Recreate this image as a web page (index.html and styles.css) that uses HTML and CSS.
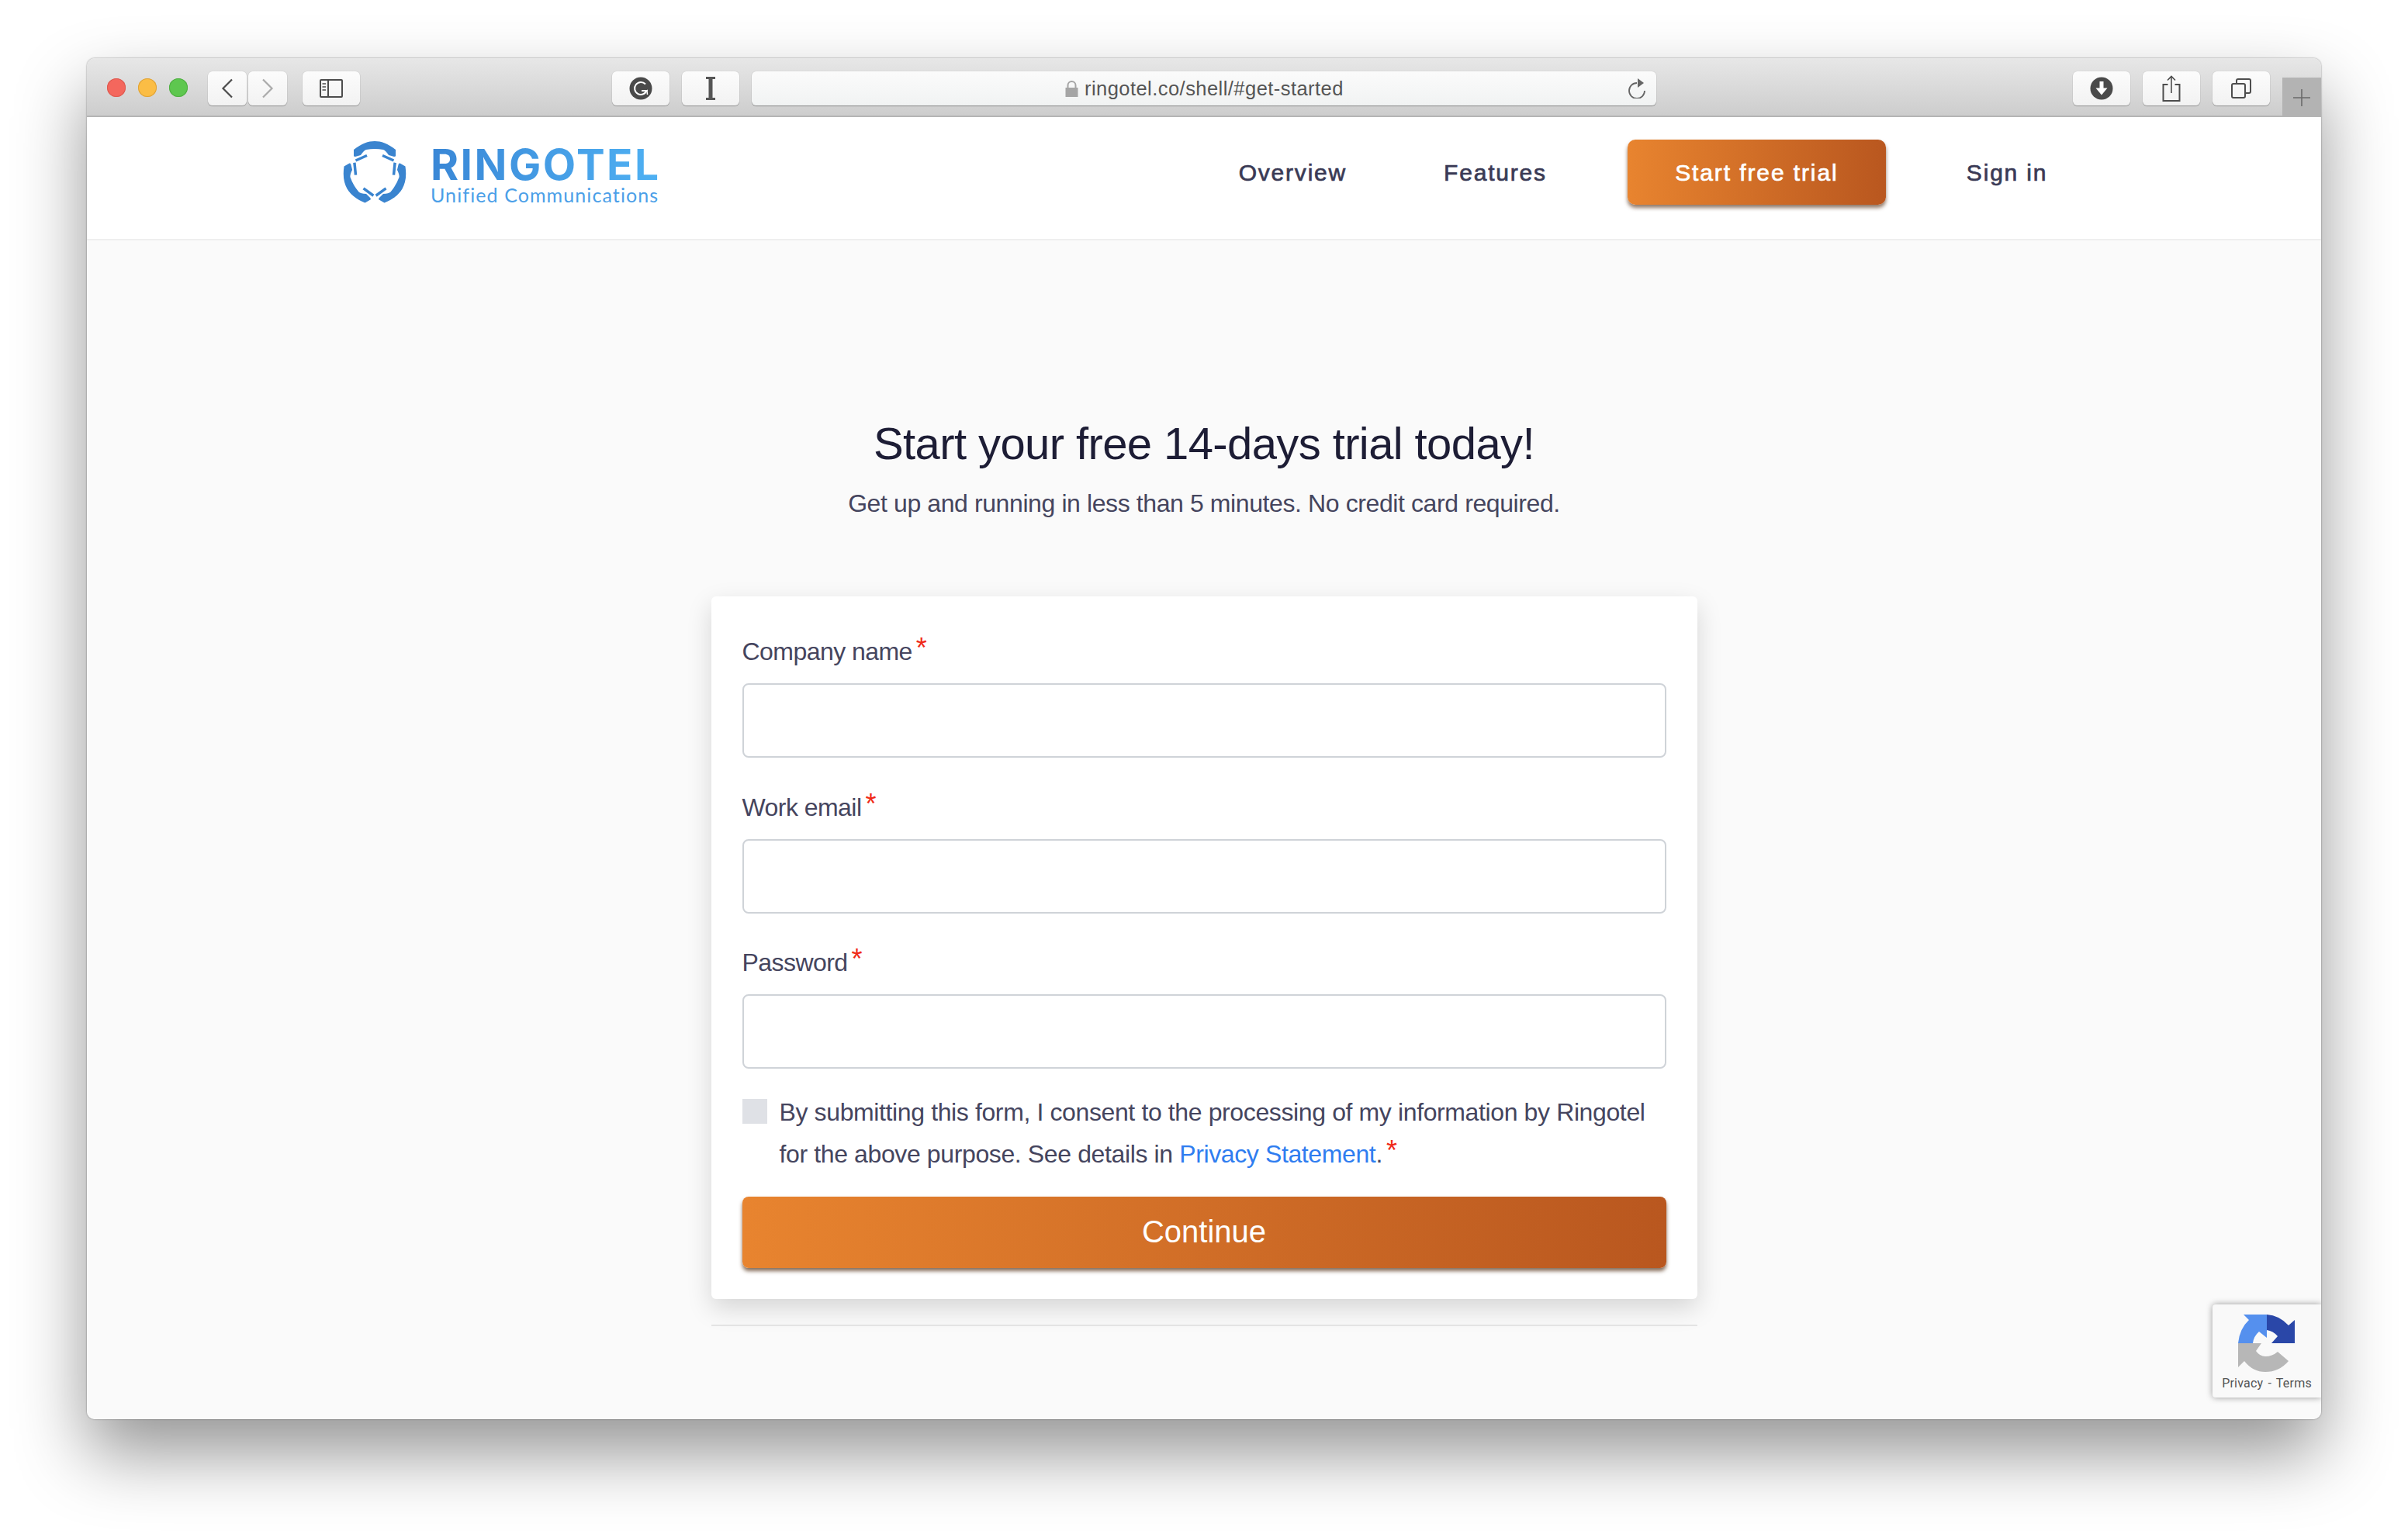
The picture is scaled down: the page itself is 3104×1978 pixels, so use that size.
FILE: index.html
```html
<!DOCTYPE html>
<html lang="en">
<head>
    <meta charset="UTF-8">
    <title>Ringotel - Start your free trial</title>
    <link rel="stylesheet" href="styles.css">
</head>
<body>
    <div class="window">
        <!-- Browser toolbar -->
        <div class="toolbar">
            <div class="lights">
                <span class="light red"></span>
                <span class="light yellow"></span>
                <span class="light green"></span>
            </div>
            <div class="tool tool-nav nav-back">
                <svg width="16" height="26" viewBox="0 0 16 26"><path d="M14 1.5 L2.5 13 L14 24.5" fill="none" stroke="#4d4d4d" stroke-width="2.2"/></svg>
            </div>
            <div class="tool tool-nav nav-forward">
                <svg width="16" height="26" viewBox="0 0 16 26"><path d="M2 1.5 L13.5 13 L2 24.5" fill="none" stroke="#ababab" stroke-width="2.2"/></svg>
            </div>
            <div class="tool tool-sidebar">
                <svg width="30" height="24" viewBox="0 0 30 24"><rect x="1" y="1" width="28" height="22" rx="1" fill="none" stroke="#4d4d4d" stroke-width="2"/><path d="M11 1 V23" stroke="#4d4d4d" stroke-width="2"/><path d="M3.5 6 H8 M3.5 10 H8 M3.5 14 H8" stroke="#777" stroke-width="2"/></svg>
            </div>
            <div class="tool tool-grammarly">
                <svg width="30" height="30" viewBox="0 0 30 30"><circle cx="15" cy="15" r="14.5" fill="#4a4a4a"/><path d="M21 9.5 A8 8 0 1 0 22.5 18 L16 18" fill="none" stroke="#fff" stroke-width="2"/><path d="M19 22 L23 18 L23.5 23" fill="none" stroke="#fff" stroke-width="1.5"/></svg>
            </div>
            <div class="tool tool-cursor">
                <svg width="14" height="30" viewBox="0 0 14 30"><path d="M1 1.5 H13 M1 28.5 H13" stroke="#555" stroke-width="3"/><path d="M7 1 V29" stroke="#555" stroke-width="5"/></svg>
            </div>
            <div class="address">
                <svg class="lock" width="17" height="21" viewBox="0 0 17 21"><path d="M3.5 10 V6 A5 5 0 0 1 13.5 6 V10" fill="none" stroke="#a5a5a5" stroke-width="2"/><rect x="0.5" y="9" width="16" height="12" fill="#a5a5a5"/></svg>
                <span class="address-text">ringotel.co/shell/#get-started</span>
                <svg class="reload" width="24" height="26" viewBox="0 0 24 26"><path d="M11 6 A10 10 0 1 0 21 16" fill="none" stroke="#666" stroke-width="1.8"/><path d="M12 0 L20 6 L12 12 Z" fill="#666"/></svg>
            </div>
            <div class="tool tool-download">
                <svg width="30" height="30" viewBox="0 0 30 30"><circle cx="15" cy="15" r="14.5" fill="#4a4a4a"/><path d="M12.5 6 H17.5 V14.5 H22.5 L15 23.5 L7.5 14.5 H12.5 Z" fill="#fff"/></svg>
            </div>
            <div class="tool tool-share">
                <svg width="24" height="34" viewBox="0 0 24 34"><path d="M7.5 12 H1.5 V33 H22.5 V12 H16.5" fill="none" stroke="#4d4d4d" stroke-width="2"/><path d="M12 1.5 V23" stroke="#4d4d4d" stroke-width="1.6"/><path d="M7 6.5 L12 1.5 L17 6.5" fill="none" stroke="#4d4d4d" stroke-width="1.6"/></svg>
            </div>
            <div class="tool tool-tabs">
                <svg width="26" height="26" viewBox="0 0 26 26"><rect x="1" y="7" width="17" height="18" rx="2" fill="none" stroke="#4d4d4d" stroke-width="2"/><path d="M7 7 V3 Q7 1 9 1 H23 Q25 1 25 3 V17 Q25 19 23 19 H18" fill="none" stroke="#4d4d4d" stroke-width="2"/></svg>
            </div>
            <div class="new-tab">
                <svg width="24" height="24" viewBox="0 0 24 24"><path d="M12 1 V23 M1 12 H23" stroke="#6a6a6a" stroke-width="1.6"/></svg>
            </div>
        </div>

        <!-- Site header -->
        <header class="site-header">
            <a href="#" class="logo">
                <svg class="logo-mark" width="82" height="80" viewBox="0 0 82 80">
                    <defs>
                        <g id="handset">
                            <path d="M14 11 C24 3 33 0 41 0 C49 0 58 3 68 11 L68 19 Q68 20 66 20 L59 18 Q55 12 52 11 Q41 9 30 11 Q27 12 23 18 L16 20 Q14 20 14 19 Z" fill="#3a84cf"/>
                            <path d="M16.5 25 L31 18.5 M51 18.5 L65.5 25" stroke="#3a84cf" stroke-width="3.5"/>
                        </g>
                    </defs>
                    <use href="#handset"/>
                    <use href="#handset" transform="rotate(120 41 41)"/>
                    <use href="#handset" transform="rotate(240 41 41)"/>
                </svg>
                <div class="logo-text">
                    <div class="logo-name">RINGOTEL</div>
                    <div class="logo-tag">Unified Communications</div>
                </div>
            </a>
            <nav class="site-nav">
                <a href="#" class="nav-link link-overview">Overview</a>
                <a href="#" class="nav-link link-features">Features</a>
                <a href="#" class="nav-button">Start free trial</a>
                <a href="#" class="nav-link link-signin">Sign in</a>
            </nav>
        </header>

        <!-- Sign up form -->
        <main class="content">
            <h1>Start your free 14-days trial today!</h1>
            <p class="subtitle">Get up and running in less than 5 minutes. No credit card required.</p>

            <form class="card">
                <label class="field-label">Company name<span class="req">*</span></label>
                <input class="field-input" type="text">

                <label class="field-label">Work email<span class="req">*</span></label>
                <input class="field-input" type="email">

                <label class="field-label">Password<span class="req">*</span></label>
                <input class="field-input" type="password">

                <div class="consent">
                    <span class="consent-box"></span>
                    <p class="consent-text">By submitting this form, I consent to the processing of my information by Ringotel for the above purpose. See details in <a href="#">Privacy Statement</a>.<span class="req">*</span></p>
                </div>

                <button type="button" class="submit-button">Continue</button>
            </form>
            <div class="card-rule"></div>
        </main>

        <div class="recaptcha">
            <svg width="74" height="74" viewBox="0 0 74 74">
                <path d="M37 0 L7 0 L14 7 Q2 18 0 37 L19 37 Q20 28 27 22 L37 30 Z" fill="#5590ee"/>
                <path d="M37 0 Q53 1 65 14 L73 7 L73 37 L43 37 L51 28 Q45 21 37 20 Z" fill="#2a47a8"/>
                <path d="M0 37 L0 68 L8 60 Q19 74 35 74 Q53 74 65 60 L51 48 Q44 54 35 54 Q28 54 23 47 L30 37 Z" fill="#b7b7b7"/>
            </svg>
            <div class="recaptcha-links">Privacy - Terms</div>
        </div>
    </div>
</body>
</html>
```

FILE: styles.css
```css
* {
    margin: 0;
    padding: 0;
    box-sizing: border-box;
}

body {
    font-family: 'Liberation Sans', Arial, sans-serif;
    background: #fff;
    width: 3104px;
    height: 1978px;
    padding: 75px 112px 0;
    overflow: hidden;
}

.window {
    position: relative;
    width: 2880px;
    height: 1755px;
    display: flex;
    flex-direction: column;
    border-radius: 10px;
    overflow: hidden;
}

body::before {
    content: "";
    position: absolute;
    left: 112px;
    top: 75px;
    width: 2880px;
    height: 1755px;
    border-radius: 10px;
    box-shadow: 0 44px 90px rgba(0,0,0,0.42), 0 0 2px rgba(0,0,0,0.5);
}

/* Browser toolbar */
.toolbar {
    position: relative;
    flex: none;
    height: 76px;
    padding: 17px 0 0 26px;
    display: flex;
    align-items: flex-start;
    background: linear-gradient(180deg, #e7e7e7 0%, #cdcdcd 100%);
    border-bottom: 2px solid #b4b4b4;
}

.lights {
    display: flex;
    gap: 16px;
    margin: 9px 26px 0 0;
}

.light {
    width: 24px;
    height: 24px;
    border-radius: 50%;
}

.light.red {
    background: #f4675d;
    box-shadow: inset 0 0 0 1px #dc5a50;
}

.light.yellow {
    background: #fbbd45;
    box-shadow: inset 0 0 0 1px #dea238;
}

.light.green {
    background: #5ec74f;
    box-shadow: inset 0 0 0 1px #4fae42;
}

.tool {
    width: 74px;
    height: 44px;
    display: flex;
    align-items: center;
    justify-content: center;
    background: linear-gradient(180deg, #fcfcfc, #f2f2f2);
    border-radius: 6px;
    box-shadow: 0 1px 1px rgba(0,0,0,0.28), 0 0 1px rgba(0,0,0,0.25);
}

.tool-nav {
    width: 50px;
}

.nav-forward {
    margin-left: 2px;
}

.tool-sidebar {
    margin-left: 20px;
}

.tool-grammarly {
    margin-left: 325px;
}

.tool-cursor {
    margin-left: 16px;
}

.address {
    position: relative;
    width: 1166px;
    height: 44px;
    margin-left: 16px;
    display: flex;
    align-items: center;
    padding-left: 404px;
    background: linear-gradient(180deg, #fbfbfb, #f1f3f3);
    border-radius: 6px;
    box-shadow: 0 1px 1px rgba(0,0,0,0.32), 0 0 1px rgba(0,0,0,0.25);
}

.lock {
    margin-right: 8px;
}

.address-text {
    font-size: 25.5px;
    line-height: 46px;
    letter-spacing: 0.45px;
    color: #555;
}

.reload {
    margin-left: auto;
    margin-right: 12px;
}

.tool-download {
    margin-left: 537px;
}

.tool-share,
.tool-tabs {
    margin-left: 16px;
}

.new-tab {
    position: absolute;
    right: 0;
    top: 25px;
    width: 50px;
    height: 49px;
    padding: 14px 0 0 13px;
    background: #b3b3b3;
}

/* Site header */
.site-header {
    flex: none;
    height: 159px;
    padding: 0 0 16px 330px;
    display: flex;
    align-items: center;
    background: #fff;
    border-bottom: 2px solid #efefef;
}

.logo {
    display: flex;
    align-items: center;
    gap: 31px;
    text-decoration: none;
}

.logo-text {
    padding-top: 10px;
}

.logo-name {
    margin-bottom: 3px;
    font-family: Inter, sans-serif;
    font-size: 55px;
    line-height: 46px;
    font-weight: 700;
    letter-spacing: 2.5px;
    background: linear-gradient(90deg, #3a87d6, #4fb1f3);
    -webkit-background-clip: text;
    background-clip: text;
    color: transparent;
}

.logo-tag {
    font-family: Lato, sans-serif;
    font-size: 25px;
    line-height: 26px;
    letter-spacing: 1.1px;
    color: #4b9fe8;
}

.site-nav {
    display: flex;
    align-items: center;
    margin-left: 745px;
}

.nav-link {
    padding-top: 3px;
    font-size: 30px;
    font-weight: 500;
    letter-spacing: 1.8px;
    color: #3a3a55;
    text-decoration: none;
    -webkit-text-stroke: 0.7px #3a3a55;
}

.link-features {
    margin-left: 125px;
}

.nav-button {
    width: 333px;
    height: 84px;
    margin-left: 104px;
    padding-top: 3px;
    display: flex;
    align-items: center;
    justify-content: center;
    background: linear-gradient(90deg, #e8842f, #b9571f);
    border-radius: 10px;
    box-shadow: 0 4px 5px rgba(84,48,22,0.65);
    font-size: 30px;
    font-weight: 500;
    letter-spacing: 1.9px;
    color: #fff;
    text-decoration: none;
    -webkit-text-stroke: 0.7px #fff;
}

.link-signin {
    margin-left: 104px;
}

/* Form */
.content {
    flex: 1;
    display: flex;
    flex-direction: column;
    align-items: center;
    padding-top: 227px;
    background: #fafafa;
}

h1 {
    font-size: 58px;
    line-height: 70px;
    font-weight: 400;
    letter-spacing: -0.6px;
    color: #1d1d35;
}

.subtitle {
    margin-top: 22px;
    font-size: 32px;
    line-height: 40px;
    letter-spacing: -0.4px;
    color: #45455e;
}

.card {
    width: 1271px;
    margin-top: 100px;
    padding: 49px 40px 40px;
    background: #fff;
    border-radius: 6px;
    box-shadow: 0 12px 32px rgba(0,0,0,0.15);
}

.field-label {
    display: block;
    height: 40px;
    margin-bottom: 23px;
    font-size: 32px;
    line-height: 36px;
    letter-spacing: -0.55px;
    color: #45455e;
}

.req {
    margin-left: 5px;
    font-size: 36px;
    line-height: 1;
    color: #f02a18;
    vertical-align: 3px;
}

.field-input {
    display: block;
    width: 100%;
    height: 96px;
    margin-bottom: 41.5px;
    background: #fff;
    border: 2px solid #cfd3d8;
    border-radius: 8px;
}

.consent {
    display: flex;
    gap: 16px;
    margin-top: -13px;
}

.consent-box {
    flex: none;
    width: 32px;
    height: 32px;
    margin-top: 10px;
    background: #dfe1e6;
}

.consent-text {
    font-size: 32px;
    line-height: 54px;
    letter-spacing: -0.38px;
    color: #45455e;
}

.consent-text a {
    color: #2f7df0;
    text-decoration: none;
}

.submit-button {
    display: block;
    width: 100%;
    height: 92px;
    margin-top: 28px;
    background: linear-gradient(90deg, #e8842f, #b9571f);
    border: none;
    border-radius: 8px;
    box-shadow: 0 4px 5px rgba(84,48,22,0.7);
    font-family: 'Liberation Sans', Arial, sans-serif;
    font-size: 40px;
    color: #fff;
}

.card-rule {
    width: 1271px;
    height: 2px;
    margin-top: 33px;
    background: #e3e3e3;
}

.recaptcha {
    position: absolute;
    right: 0;
    top: 1607px;
    width: 140px;
    height: 120px;
    padding-top: 13px;
    background: #f9f9f9;
    border-radius: 4px 0 0 4px;
    box-shadow: 0 0 8px rgba(0,0,0,0.4);
    display: flex;
    flex-direction: column;
    align-items: center;
}

.recaptcha-links {
    margin-top: 5px;
    font-family: Roboto, sans-serif;
    font-size: 16px;
    letter-spacing: 0.2px;
    word-spacing: 2px;
    white-space: nowrap;
    color: #555;
}
```
